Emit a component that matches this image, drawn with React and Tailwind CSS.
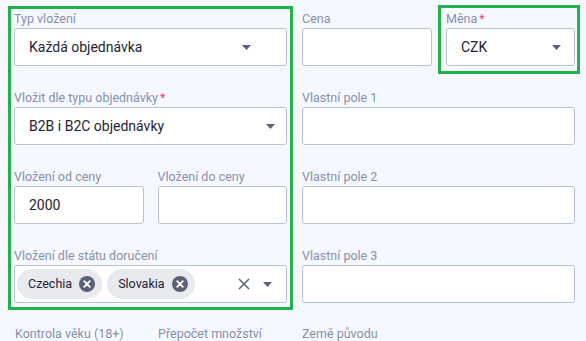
import React from "react"

const labelCls = "block h-[19px] leading-[19px] text-[12.5px] text-[#8790ab] whitespace-nowrap"
const inputCls = "h-[38px] bg-white border border-[#b9c1d6] rounded-[3px] flex items-center text-[14px] text-[#1f2333]"

function Label({ children, required }) {
  return (
    <div className={labelCls}>
      {children}
      {required && <span className="text-[#e8467a] ml-[2px]">*</span>}
    </div>
  )
}

function Arrow() {
  return (
    <svg width="9" height="5" viewBox="0 0 9 5" className="shrink-0">
      <path d="M0 0 L9 0 L4.5 5 Z" fill="#5c6275" />
    </svg>
  )
}

function Select({ value, arrowRight }) {
  return (
    <div className={`${inputCls} justify-between pl-[14px] ${arrowRight}`}>
      <span>{value}</span>
      <Arrow />
    </div>
  )
}

function Input({ value }) {
  return <div className={`${inputCls} pl-[14px]`}>{value}</div>
}

function Chip({ label }) {
  return (
    <div className="h-[30px] rounded-full bg-[#e8eaee] flex items-center pl-[11px] pr-[7px] gap-[7px] text-[12.5px] text-[#1f2333]">
      <span>{label}</span>
      <span className="w-[16px] h-[16px] rounded-full bg-[#5b6178] flex items-center justify-center">
        <svg width="8" height="8" viewBox="0 0 8 8">
          <path d="M1.2 1.2 L6.8 6.8 M6.8 1.2 L1.2 6.8" stroke="#fff" strokeWidth="1.8" strokeLinecap="round" />
        </svg>
      </span>
    </div>
  )
}

export default function App() {
  return (
    <div className="w-[586px] h-[341px] overflow-hidden bg-[#f5f8fe] font-['Roboto',sans-serif] pt-[6px] pl-[8px]">
      <div className="flex gap-[9px]">

        {/* Left outlined group */}
        <div className="w-[285px] shrink-0 border-[3px] border-[#22b14c] px-[3px] pb-[4px] flex flex-col gap-[22px]">
          <div>
            <Label>Typ vložení</Label>
            <Select value="Každá objednávka" arrowRight="pr-[35px]" />
          </div>
          <div>
            <Label required>Vložit dle typu objednávky</Label>
            <Select value="B2B i B2C objednávky" arrowRight="pr-[11px]" />
          </div>
          <div className="grid grid-cols-2 gap-[14px]">
            <div>
              <Label>Vložení od ceny</Label>
              <Input value="2000" />
            </div>
            <div>
              <Label>Vložení do ceny</Label>
              <Input value="" />
            </div>
          </div>
          <div>
            <Label>Vložení dle státu doručení</Label>
            <div className={`${inputCls} pl-[2px] pr-[14px]`}>
              <div className="flex gap-[5px]">
                <Chip label="Czechia" />
                <Chip label="Slovakia" />
              </div>
              <div className="ml-auto flex items-center gap-[13px]">
                <svg width="12" height="12" viewBox="0 0 12 12">
                  <path d="M1 1 L11 11 M11 1 L1 11" stroke="#5c6275" strokeWidth="1.5" />
                </svg>
                <Arrow />
              </div>
            </div>
          </div>
        </div>

        {/* Right column */}
        <div className="w-[278px] shrink-0 pt-[3px] flex flex-col gap-[22px]">
          <div className="flex gap-[6px] items-start">
            <div className="w-[130px] shrink-0">
              <Label>Cena</Label>
              <Input value="" />
            </div>
            <div className="w-[142px] shrink-0 -mt-[4px] -mb-[8px] border-[3px] border-[#22b14c] pt-[1px] pl-[5px] pr-[2px] pb-[5px]">
              <Label required>Měna</Label>
              <Select value="CZK" arrowRight="pr-[13px]" />
            </div>
          </div>
          <div className="w-[273px]">
            <Label>Vlastní pole 1</Label>
            <Input value="" />
          </div>
          <div className="w-[273px]">
            <Label>Vlastní pole 2</Label>
            <Input value="" />
          </div>
          <div className="w-[273px]">
            <Label>Vlastní pole 3</Label>
            <Input value="" />
          </div>
        </div>
      </div>

      {/* Next row labels */}
      <div className="flex mt-[14px] pl-[7px]">
        <div className="w-[143px]"><Label>Kontrola věku (18+)</Label></div>
        <div className="w-[144px]"><Label>Přepočet množství</Label></div>
        <div><Label>Země původu</Label></div>
      </div>
    </div>
  )
}
